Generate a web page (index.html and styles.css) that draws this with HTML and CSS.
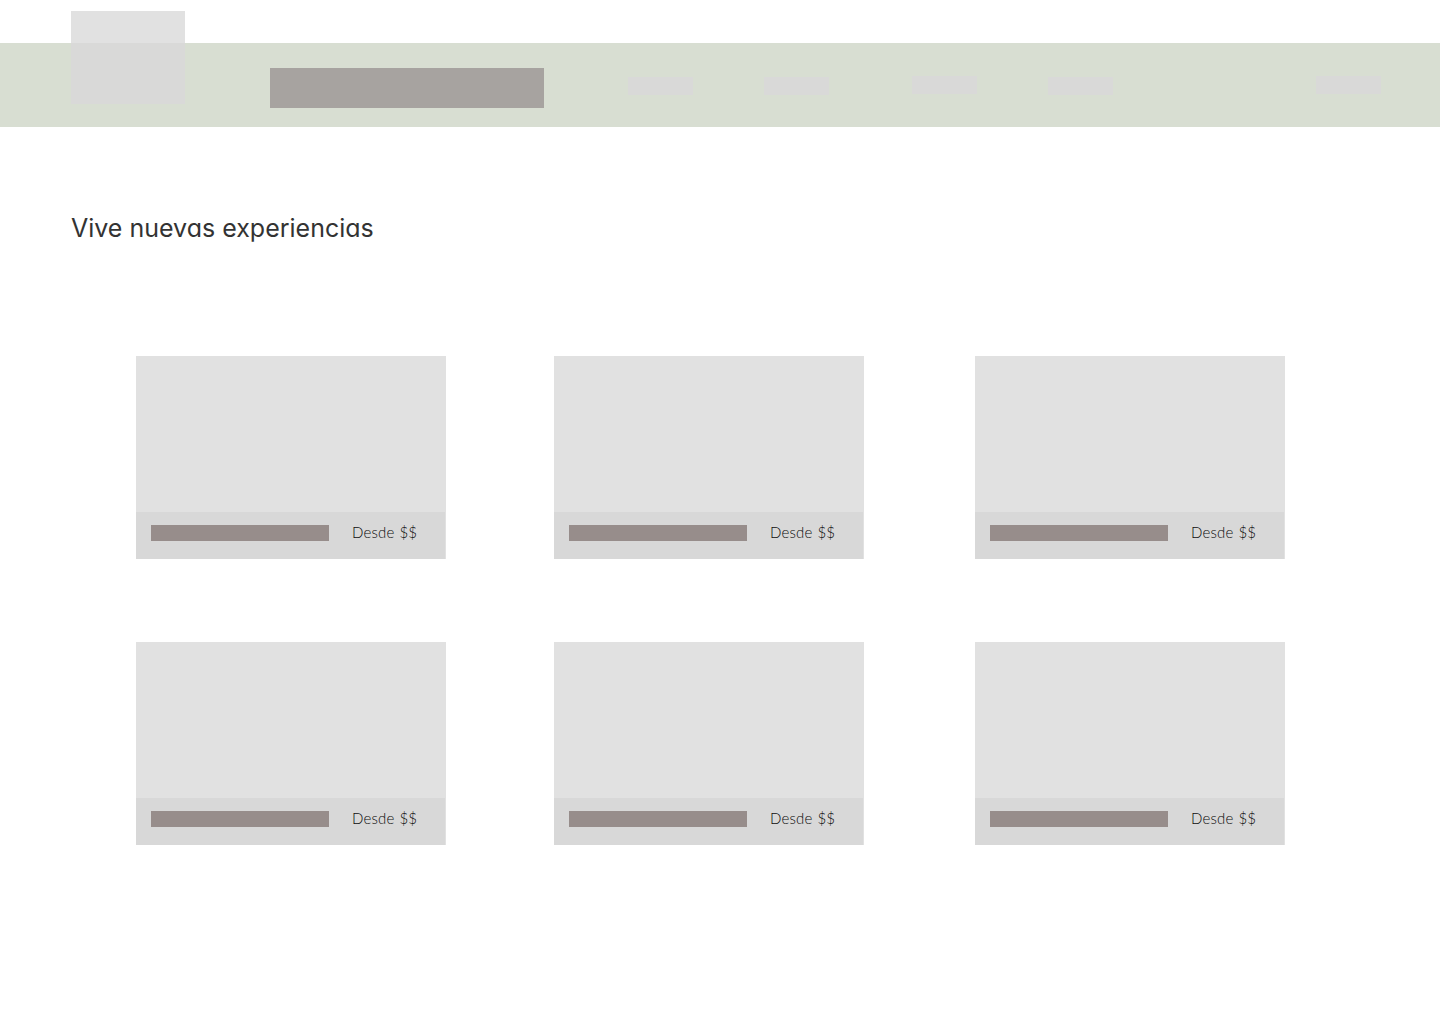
FILE: index.html
```html
<!DOCTYPE html>
<html lang="es">
<head>
<meta charset="utf-8">
<title>Vive nuevas experiencias</title>
<link rel="stylesheet" href="styles.css">
</head>
<body>
<header class="header">
  <div class="logo"></div>
  <div class="search"></div>
  <nav class="nav">
    <span class="nav-item"></span>
    <span class="nav-item"></span>
    <span class="nav-item raised"></span>
    <span class="nav-item"></span>
    <span class="nav-item account raised"></span>
  </nav>
</header>
<main>
  <h1 class="title">Vive nuevas experiencias</h1>
  <section class="grid">
    <article class="card"><div class="caption"><span class="name"></span><span class="price">Desde $$</span></div></article>
    <article class="card"><div class="caption"><span class="name"></span><span class="price">Desde $$</span></div></article>
    <article class="card"><div class="caption"><span class="name"></span><span class="price">Desde $$</span></div></article>
    <article class="card"><div class="caption"><span class="name"></span><span class="price">Desde $$</span></div></article>
    <article class="card"><div class="caption"><span class="name"></span><span class="price">Desde $$</span></div></article>
    <article class="card"><div class="caption"><span class="name"></span><span class="price">Desde $$</span></div></article>
  </section>
</main>
</body>
</html>
```
FILE: styles.css
```css
* { box-sizing: border-box; }
body {
  margin: 0;
  min-height: 1024px;
  padding-top: 43px;
  background: #fff;
  color: #333;
  font-family: Inter, sans-serif;
}
.header {
  display: flex;
  align-items: flex-start;
  height: 84px;
  padding: 0 59px 0 71px;
  background: #d8ded2;
}
.logo {
  width: 114px;
  height: 93px;
  margin-top: -32px;
  background: linear-gradient(#e1e1e1 32px, #d9d9d8 32px);
}
.search {
  width: 274px;
  height: 40px;
  margin: 25px 84px 0 85px;
  background: #a7a3a0;
}
.nav {
  display: flex;
  flex: 1;
  margin-top: 34px;
}
.nav-item {
  width: 65px;
  height: 18px;
  margin-right: 71px;
  background: #d9d9d8;
}
.nav-item.raised { margin-top: -1px; }
.nav-item:nth-child(2) { margin-right: 83px; }
.nav-item.account { margin: -1px 0 0 auto; }
.title {
  margin: 83px 0 0 71px;
  font-size: 25px;
  font-weight: 400;
  line-height: 36px;
  font-feature-settings: "cv11";
  letter-spacing: 0;
  white-space: nowrap;
}
.grid {
  display: grid;
  grid-template-columns: 418px 421px 310px;
  row-gap: 83px;
  margin: 110px 0 0 136px;
}
.card {
  display: flex;
  align-items: flex-end;
  width: 310px;
  height: 203px;
  background: #e1e1e1;
}
.caption {
  display: flex;
  width: 309px;
  height: 47px;
  padding: 13px 0 0 15px;
  background: #d8d8d8;
}
.name {
  width: 178px;
  height: 16px;
  margin-right: 23px;
  background: #978d8b;
}
.price {
  color: #0c0c0c;
  font-family: Lato, sans-serif;
  font-size: 15px;
  font-weight: 300;
  line-height: 14px;
  letter-spacing: 0.2px;
  word-spacing: 0.6px;
  white-space: nowrap;
}
```
